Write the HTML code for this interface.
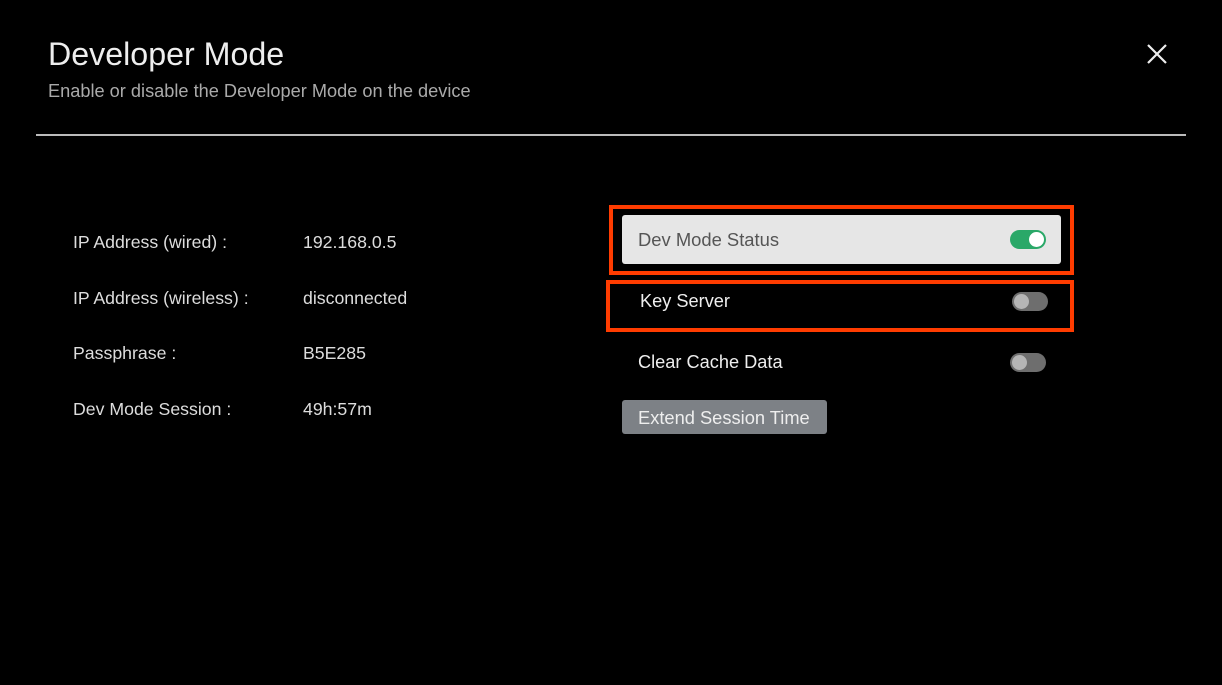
<!DOCTYPE html>
<html><head><meta charset="utf-8"><style>
body{margin:0;width:1222px;height:685px;background:#000;position:relative;overflow:hidden;font-family:"Liberation Sans",sans-serif}
.a{position:absolute;white-space:nowrap;line-height:1}
.l{color:#ddd;font-size:17.7px}
.tg{position:absolute;width:36px;height:19px;border-radius:10px;background:#6e6e6e}
.tg i{position:absolute;left:2px;top:2px;width:15px;height:15px;border-radius:50%;background:#b5b5b5}
</style></head><body>
<div class="a" style="left:48px;top:38px;font-size:32.2px;color:#eee">Developer Mode</div>
<div class="a" style="left:48px;top:82px;font-size:18.2px;color:#aaa">Enable or disable the Developer Mode on the device</div>
<svg class="a" style="left:1146px;top:43px" width="22" height="22"><path d="M2 2L20 20M20 2L2 20" stroke="#eee" stroke-width="2.2"/></svg>
<div class="a" style="left:36px;top:134px;width:1150px;height:2px;background:#bbb"></div>

<div class="a l" style="left:73px;top:234px">IP Address (wired) :</div>
<div class="a l" style="left:303px;top:234px">192.168.0.5</div>
<div class="a l" style="left:73px;top:290px">IP Address (wireless) :</div>
<div class="a l" style="left:303px;top:290px">disconnected</div>
<div class="a l" style="left:73px;top:345px">Passphrase :</div>
<div class="a l" style="left:303px;top:345px">B5E285</div>
<div class="a l" style="left:73px;top:401px">Dev Mode Session :</div>
<div class="a l" style="left:303px;top:401px">49h:57m</div>

<div class="a" style="left:609px;top:205px;width:457px;height:62px;border:4px solid #ff3c00"></div>
<div class="a" style="left:622px;top:215px;width:439px;height:49px;background:#e6e6e6;border-radius:3px"></div>
<div class="a" style="left:638px;top:231px;font-size:18.4px;color:#555">Dev Mode Status</div>
<div class="tg" style="left:1010px;top:230px;background:#2aa868"><i style="left:19px;background:#fff"></i></div>

<div class="a" style="left:606px;top:280px;width:460px;height:44px;border:4px solid #ff3c00"></div>
<div class="a" style="left:640px;top:292px;font-size:18.2px;color:#eee">Key Server</div>
<div class="tg" style="left:1012px;top:292px"><i></i></div>

<div class="a" style="left:638px;top:353px;font-size:18.2px;color:#eee">Clear Cache Data</div>
<div class="tg" style="left:1010px;top:353px"><i></i></div>

<div class="a" style="left:622px;top:400px;width:205px;height:34px;background:#7d8186;border-radius:3px"></div>
<div class="a" style="left:638px;top:409px;font-size:18.3px;color:#eee">Extend Session Time</div>
</body></html>
